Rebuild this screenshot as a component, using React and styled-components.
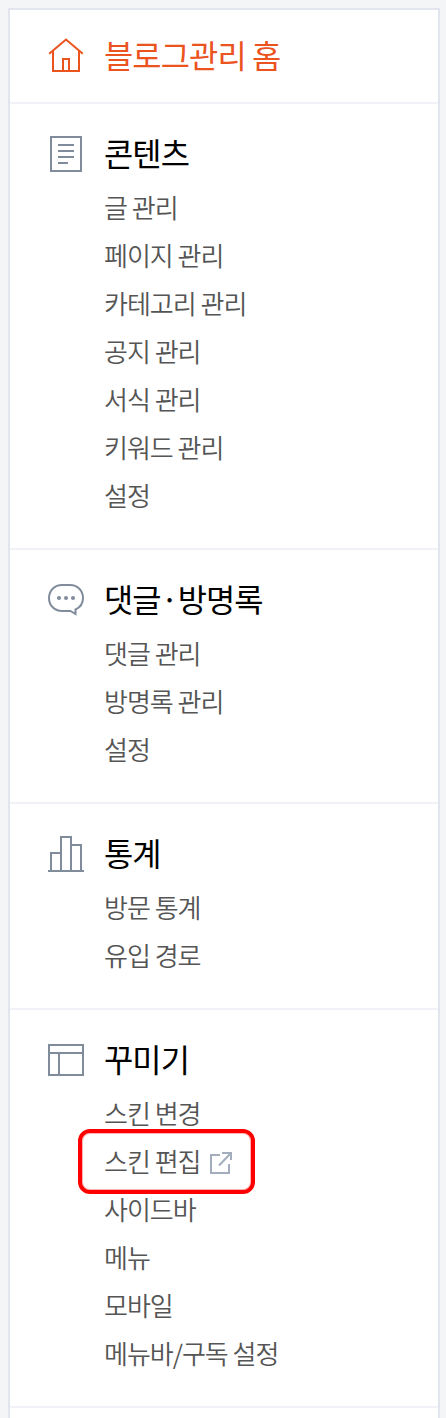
import React from 'react';
import styled, { createGlobalStyle } from 'styled-components';

const GlobalStyle = createGlobalStyle`
  * { box-sizing: border-box; }
  body {
    margin: 0;
    background: #f3f5f7;
    font-family: 'Noto Sans CJK KR', 'Noto Sans', sans-serif;
  }
`;

const Page = styled.div`
  height: 1418px;
  padding: 8px 6px 0 8px;
  overflow: hidden;
`;

const Panel = styled.nav`
  height: 1440px;
  border: 2px solid #e2e4ee;
  background: #fff;
`;

const Section = styled.section`
  padding: ${(p) => (p.$single ? '22px 0 24px' : '26px 0 28px')};
  border-bottom: 2px solid #f1f2f7;
`;

const Heading = styled.h2`
  display: flex;
  align-items: flex-start;
  height: 46px;
  margin: 0;
  padding-left: 38px;
  color: ${(p) => (p.$active ? '#eb531f' : '#000')};
  font-size: 31.8px;
  font-weight: 400;
  line-height: 44px;
  letter-spacing: -0.9px;
  white-space: nowrap;
`;

const Icon = styled.svg`
  flex: none;
  width: 36px;
  height: 36px;
  margin: ${(p) => (p.$active ? '5px' : '6px')} 20px 0 0;
  fill: none;
  stroke: ${(p) => (p.$active ? '#eb531f' : '#808b9c')};
  stroke-width: 2;
`;

const List = styled.ul`
  margin: 8px 0 0;
  padding: 0 0 0 94px;
  list-style: none;
`;

const Item = styled.li`
  position: relative;
  display: flex;
  align-items: flex-start;
  height: 48px;
  color: #555;
  font-size: 26px;
  font-weight: 350;
  line-height: 46px;
  letter-spacing: -1px;
  white-space: nowrap;
`;

const LinkIcon = styled.svg`
  flex: none;
  width: 24px;
  height: 24px;
  margin: 13px 0 0 8.5px;
  fill: none;
  stroke: #a4adbd;
  stroke-width: 2;
`;

const Highlight = styled.span`
  position: absolute;
  top: -9px;
  left: -26px;
  width: 177px;
  height: 65px;
  border: 4px solid #fe0000;
  border-radius: 12px;
  box-shadow: inset 0 0 0 1px rgba(254, 0, 0, 0.3);
`;

const icons = {
  home: (
    <>
      <path d="M1.200 16.700 18 2.500l16.800 14.200" />
      <path d="M5 13.500V34h26V13.500" />
      <path d="M15 34V22h6v12" />
    </>
  ),
  content: (
    <>
      <path d="M3 1h30v34H3z" />
      <path d="M10 9h16M10 15h16M10 21h16M10 27h10" />
    </>
  ),
  comment: (
    <>
      <path d="M14 3h8c7.500 0 13 5.500 13 13 0 5.200-2.800 9.400-7.500 11.500V32L22.500 29H14C6.500 29 1 23.500 1 16S6.500 3 14 3z" />
      <g fill="#808b9c" stroke="none">
        <circle cx="11" cy="16" r="2" />
        <circle cx="18" cy="16" r="2" />
        <circle cx="25" cy="16" r="2" />
      </g>
    </>
  ),
  stats: (
    <path d="M0 35h36M3 35V17h10M13 35V1h10v34M23 9h10v26" />
  ),
  design: (
    <path d="M1 3h34v30H1zM1 11h34M11 11v22" />
  ),
};

const sections = [
  { icon: 'home', title: '블로그관리 홈', active: true },
  {
    icon: 'content',
    title: '콘텐츠',
    items: ['글 관리', '페이지 관리', '카테고리 관리', '공지 관리', '서식 관리', '키워드 관리', '설정'],
  },
  { icon: 'comment', title: '댓글·방명록', items: ['댓글 관리', '방명록 관리', '설정'] },
  { icon: 'stats', title: '통계', items: ['방문 통계', '유입 경로'] },
  {
    icon: 'design',
    title: '꾸미기',
    items: ['스킨 변경', '스킨 편집', '사이드바', '메뉴', '모바일', '메뉴바/구독 설정'],
    external: '스킨 편집',
  },
];

export default function App() {
  return (
    <Page>
      <GlobalStyle />
      <Panel>
        {sections.map(({ icon, title, active, items, external }) => (
          <Section key={title} $single={!items}>
            <Heading $active={active}>
              <Icon $active={active} viewBox="0 0 36 36">{icons[icon]}</Icon>
              {title}
            </Heading>
            {items && (
              <List>
                {items.map((label) => (
                  <Item key={label}>
                    {label}
                    {label === external && (
                      <>
                        <LinkIcon viewBox="0 0 24 24">
                          <path d="M11 4H2v18h18v-9M10 14.500 22 2M13 2h9v7" />
                        </LinkIcon>
                        <Highlight />
                      </>
                    )}
                  </Item>
                ))}
              </List>
            )}
          </Section>
        ))}
      </Panel>
    </Page>
  );
}
